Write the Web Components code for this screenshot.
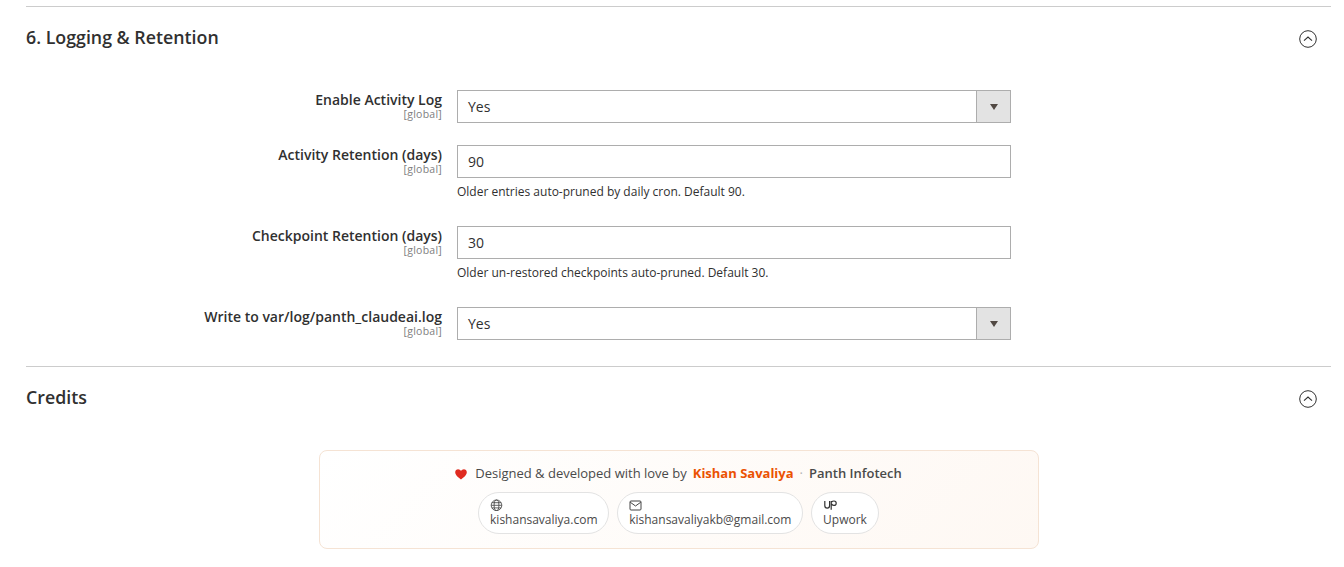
<!DOCTYPE html>
<html lang="en">
<head>
<meta charset="utf-8">
<title>Logging &amp; Retention</title>
<style>
    html, body { margin: 0; background: #fff; }
    body { font-family: "Open Sans", "Liberation Sans", sans-serif; color: #303030; overflow: hidden; }
    .page { padding: 6px 13px 0 26px; height: 561px; }
</style>
</head>
<body>
<div class="page">
    <config-section heading="6. Logging &amp; Retention">
        <config-row label="Enable Activity Log"><config-select value="Yes"></config-select></config-row>
        <config-row label="Activity Retention (days)" note="Older entries auto-pruned by daily cron. Default 90."><config-input value="90"></config-input></config-row>
        <config-row label="Checkpoint Retention (days)" note="Older un-restored checkpoints auto-pruned. Default 30."><config-input value="30"></config-input></config-row>
        <config-row label="Write to var/log/panth_claudeai.log"><config-select value="Yes"></config-select></config-row>
    </config-section>
    <config-section heading="Credits">
        <credits-card>
            <credit-pill label="kishansavaliya.com" icon="globe"></credit-pill>
            <credit-pill label="kishansavaliyakb@gmail.com" icon="mail"></credit-pill>
            <credit-pill label="Upwork" icon="upwork"></credit-pill>
        </credits-card>
    </config-section>
</div>
<script>
    class ConfigSection extends HTMLElement {
        constructor() {
            super();
            this.shadow = this.attachShadow({mode: 'open'});
            this.shadow.innerHTML = `
            <div class="head">
                <span class="title"></span>
                <svg width="18" height="18" viewBox="0 0 18 18" fill="none" stroke="#303030">
                    <circle cx="9" cy="9" r="8.3" stroke-width="1"/>
                    <path d="M5 10.6 L9 7 L13 10.6" stroke-width="1.1"/>
                </svg>
            </div>
            <div class="body"><slot></slot></div>
            <style>
                :host {
                    display: block;
                    border-top: 1px solid #cccccc;
                }
                .head {
                    height: 61px;
                    display: flex;
                    justify-content: space-between;
                    align-items: flex-start;
                    padding: 0 14px 0 0;
                    box-sizing: border-box;
                }
                .title {
                    font-size: 17.8px;
                    line-height: 23px;
                    margin-top: 19px;
                    font-weight: 600;
                    color: #303030;
                }
                svg { display: block; margin-top: 23px; }
                .body {
                    padding-top: 22px;
                    display: flex;
                    flex-flow: column;
                    padding-bottom: 26px;
                }
            </style>
            `;
        }

        connectedCallback() {
            this.shadowRoot.querySelector('.title').textContent = this.getAttribute('heading');
        }
    }

    class ConfigRow extends HTMLElement {
        constructor() {
            super();
            this.shadow = this.attachShadow({mode: 'open'});
            this.shadow.innerHTML = `
            <div class="label">
                <div class="name"></div>
                <div class="scope">[global]</div>
            </div>
            <div class="control">
                <slot></slot>
                <div class="note"></div>
            </div>
            <style>
                :host {
                    display: grid;
                    grid-template-columns: 416px 554px;
                    column-gap: 15px;
                    padding-bottom: 22px;
                }
                :host(:last-child) { padding-bottom: 0; }
                .label { text-align: right; }
                .name {
                    font-size: 14px;
                    line-height: 19px;
                    font-weight: 600;
                    color: #303030;
                }
                .scope {
                    font-size: 10.5px;
                    letter-spacing: 0.25px;
                    line-height: 10px;
                    color: #808080;
                }
                .note {
                    font-size: 12px;
                    line-height: 16px;
                    color: #303030;
                    margin-top: 6px;
                    margin-bottom: 4px;
                }
                .note:empty { display: none; }
            </style>
            `;
        }

        connectedCallback() {
            this.shadowRoot.querySelector('.name').textContent = this.getAttribute('label');
            this.shadowRoot.querySelector('.note').textContent = this.getAttribute('note') || '';
        }
    }

    class ConfigInput extends HTMLElement {
        constructor() {
            super();
            this.shadow = this.attachShadow({mode: 'open'});
            this.shadow.innerHTML = `
            <div class="box"></div>
            <style>
                :host { display: block; }
                .box {
                    box-sizing: border-box;
                    height: 33px;
                    border: 1px solid #adadad;
                    background: #fff;
                    padding: 0 10px;
                    font-size: 14px;
                    line-height: 32px;
                    color: #303030;
                }
            </style>
            `;
        }

        connectedCallback() {
            this.shadowRoot.querySelector('.box').textContent = this.getAttribute('value');
        }
    }

    class ConfigSelect extends HTMLElement {
        constructor() {
            super();
            this.shadow = this.attachShadow({mode: 'open'});
            this.shadow.innerHTML = `
            <div class="box">
                <span class="value"></span>
                <span class="arrow"></span>
            </div>
            <style>
                :host { display: block; }
                .box {
                    box-sizing: border-box;
                    height: 33px;
                    border: 1px solid #adadad;
                    background: #fff;
                    display: flex;
                    justify-content: space-between;
                    font-size: 14px;
                    line-height: 32px;
                    color: #303030;
                }
                .value { padding-left: 10px; }
                .arrow {
                    width: 33px;
                    border-left: 1px solid #adadad;
                    background: #e3e3e3;
                    display: flex;
                    align-items: center;
                    justify-content: center;
                }
                .arrow::after {
                    content: '';
                    border-top: 6px solid #514943;
                    border-left: 4.5px solid transparent;
                    border-right: 4.5px solid transparent;
                }
            </style>
            `;
        }

        connectedCallback() {
            this.shadowRoot.querySelector('.value').textContent = this.getAttribute('value');
        }
    }

    class CreditsCard extends HTMLElement {
        constructor() {
            super();
            this.shadow = this.attachShadow({mode: 'open'});
            this.shadow.innerHTML = `
            <div class="line">
                <svg width="12" height="11" viewBox="0 0 12 11"><path fill="#e02b20" d="M6 10.6 C4.6 9.4 0.2 6.5 0.2 3.3 C0.2 1.4 1.6 0.3 3.1 0.3 C4.3 0.3 5.4 1 6 2 C6.6 1 7.7 0.3 8.9 0.3 C10.4 0.3 11.8 1.4 11.8 3.3 C11.8 6.5 7.4 9.4 6 10.6 Z"/></svg>
                <span class="love">Designed &amp; developed with love by</span>
                <span class="author">Kishan Savaliya</span>
                <span class="dot">·</span>
                <span class="company">Panth Infotech</span>
            </div>
            <div class="pills"><slot></slot></div>
            <style>
                :host {
                    display: flex;
                    flex-flow: column;
                    align-items: center;
                    box-sizing: border-box;
                    width: 720px;
                    height: 99px;
                    margin-left: 293px;
                    padding: 13px 1px 0 0;
                    border: 1px solid #f5e3d4;
                    border-radius: 8px;
                    background: linear-gradient(135deg, #ffffff 0%, #fef8f3 100%);
                }
                .line {
                    display: flex;
                    align-items: center;
                    height: 18px;
                    font-size: 13px;
                    color: #4a4a4a;
                }
                svg { display: block; margin-right: 8px; margin-top: 2px; }
                .author { font-weight: 700; color: #eb5202; margin-left: 6px; }
                .dot { color: #b5b5b5; margin: 0 6px; }
                .company { font-weight: 600; color: #4a4a4a; }
                .pills { display: flex; gap: 8px; margin-top: 10px; }
            </style>
            `;
        }
    }

    const PILL_ICONS = {
        globe: '<svg width="13" height="13" viewBox="0 0 13 13" fill="none" stroke="#444" stroke-width="0.85"><circle cx="6.5" cy="7.3" r="5.3"/><ellipse cx="6.5" cy="7.3" rx="2.4" ry="5.3"/><path d="M1.2 7.3 H11.8 M1.9 4.7 H11.1 M1.9 9.9 H11.1"/></svg>',
        mail: '<svg width="13" height="13" viewBox="0 0 13 13" fill="none" stroke="#444" stroke-width="1"><rect x="1" y="3" width="11" height="9" rx="1"/><path d="M1.2 4.2 L6.5 8 L11.8 4.2"/></svg>',
        upwork: '<svg width="15" height="13" viewBox="0 0 15 13" fill="none" stroke="#333" stroke-width="1.2"><path d="M1.8 3 V7.5 C1.8 9.4 2.8 10.2 4.2 10.2 C5.6 10.2 6.6 9.4 6.6 7.5 V3"/><path d="M8.2 3 V11.8 M8.5 4 C9.3 3.2 10 3 11 3 C12.3 3 13.2 3.8 13.2 5.2 C13.2 6.6 12.3 7.4 11 7.4 C10 7.4 9.2 6.8 8.5 6"/></svg>'
    };

    class CreditPill extends HTMLElement {
        constructor() {
            super();
            this.shadow = this.attachShadow({mode: 'open'});
            this.shadow.innerHTML = `
            <span class="icon"></span>
            <span class="label"></span>
            <style>
                :host {
                    display: flex;
                    flex-flow: column;
                    align-items: flex-start;
                    justify-content: center;
                    box-sizing: border-box;
                    height: 42px;
                    padding: 0 10.85px;
                    border: 1px solid #e3e3e3;
                    border-radius: 21px;
                    background: #fff;
                }
                .icon { display: block; height: 13px; line-height: 0; }
                .label {
                    font-size: 12px;
                    line-height: 17px;
                    color: #4a4a4a;
                    white-space: nowrap;
                }
            </style>
            `;
        }

        connectedCallback() {
            this.shadowRoot.querySelector('.icon').innerHTML = PILL_ICONS[this.getAttribute('icon')];
            this.shadowRoot.querySelector('.label').textContent = this.getAttribute('label');
        }
    }

    customElements.define('config-section', ConfigSection);
    customElements.define('config-row', ConfigRow);
    customElements.define('config-input', ConfigInput);
    customElements.define('config-select', ConfigSelect);
    customElements.define('credits-card', CreditsCard);
    customElements.define('credit-pill', CreditPill);
</script>
</body>
</html>
